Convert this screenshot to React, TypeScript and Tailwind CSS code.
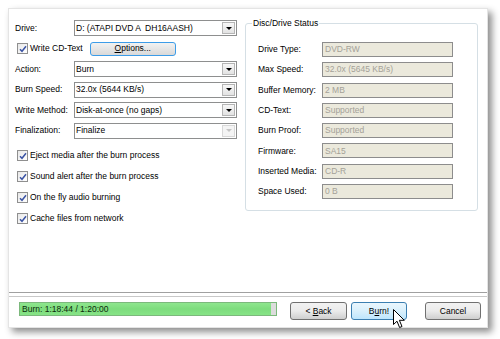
import React from "react";

const font = { fontFamily: '"Liberation Sans", Arial, sans-serif' };

const Select = ({ value, disabled }: { value: string; disabled?: boolean }) => (
  <div className="flex h-[16px] w-[163px] items-stretch border border-[#8e8f8f] bg-white">
    <div className="flex flex-1 items-center whitespace-pre pl-[1px] text-[8.5px] leading-none text-black">
      {value}
    </div>
    <div
      className={
        "m-[1px] flex w-[13px] items-center justify-center border " +
        (disabled
          ? "border-[#d8d8d8] bg-[#f4f4f4]"
          : "border-[#b5b5b5] bg-gradient-to-b from-[#f7f7f7] to-[#e3e3e3]")
      }
    >
      <div
        className={
          "h-0 w-0 border-x-[3px] border-t-[3px] border-x-transparent " +
          (disabled ? "border-t-[#c4c4c4]" : "border-t-black")
        }
      />
    </div>
  </div>
);

const Check = () => (
  <div className="flex h-[11px] w-[11px] items-center justify-center border border-[#8f8f8f] bg-gradient-to-br from-[#e8e8e8] to-[#ffffff]">
    <svg width="8" height="8" viewBox="0 0 8 8">
      <path d="M1 4.2 L3 6.3 L7 1.3" fill="none" stroke="#3a53a4" strokeWidth="1.5" />
    </svg>
  </div>
);

const Row = ({ label, value }: { label: string; value: string }) => (
  <div className="flex h-[16px] items-center">
    <div className="w-[59px] text-[8.5px] text-black">{label}</div>
    <Select value={value} disabled={label === "Finalization:"} />
  </div>
);

const Field = ({ label, value }: { label: string; value: string }) => (
  <div className="flex h-[15px] items-center">
    <div className="w-[64px] text-[8.5px] text-black">{label}</div>
    <div className="flex h-[15px] w-[131px] items-center border border-[#8d8d8d] bg-[#ebe9dc] pl-[2px] text-[8.5px] text-[#a4a198]">
      {value}
    </div>
  </div>
);

const Button = ({
  children,
  hot,
  w,
}: {
  children: React.ReactNode;
  hot?: boolean;
  w: string;
}) => (
  <div
    className={
      w +
      " flex h-[18px] items-center justify-center rounded-[3px] border text-[8.5px] text-black " +
      (hot
        ? "border-[#3c7fb1] bg-gradient-to-b from-[#eaf6fd] via-[#d9f0fc] to-[#bee6fd]"
        : "border-[#707070] bg-gradient-to-b from-[#f2f2f2] via-[#ebebeb] to-[#cfcfcf]")
    }
  >
    {children}
  </div>
);

export default function App() {
  const status: [string, string][] = [
    ["Drive Type:", "DVD-RW"],
    ["Max Speed:", "32.0x (5645 KB/s)"],
    ["Buffer Memory:", "2 MB"],
    ["CD-Text:", "Supported"],
    ["Burn Proof:", "Supported"],
    ["Firmware:", "SA15"],
    ["Inserted Media:", "CD-R"],
    ["Space Used:", "0 B"],
  ];
  const checks = [
    "Eject media after the burn process",
    "Sound alert after the burn process",
    "On the fly audio burning",
    "Cache files from network",
  ];

  return (
    <div className="h-[339px] w-[500px] bg-white pl-[8px] pt-[8px]" style={font}>
      <div className="relative flex h-[320px] w-[480px] flex-col border border-[#e4e4e4] bg-white shadow-[4px_4px_7px_rgba(0,0,0,0.45)]">
        <div className="flex flex-1 gap-[8px] pl-[6px] pt-[11px]">
          <div className="flex w-[222px] flex-col">
            <div className="flex flex-col gap-[4.5px]">
              <Row label="Drive:" value="D: (ATAPI DVD A  DH16AASH)" />
              <div className="flex h-[16px] items-center">
                <div className="ml-[2px] mr-[2px]">
                  <Check />
                </div>
                <span className="text-[8.5px] text-black">Write CD-Text</span>
                <div className="ml-[7px] flex h-[14px] w-[86px] items-center justify-center rounded-[3px] border border-[#3c9ce8] bg-gradient-to-b from-[#f2f2f2] to-[#d9d9d9] text-[8.5px] text-black">
                  <span>
                    <span className="underline">O</span>ptions...
                  </span>
                </div>
              </div>
              <Row label="Action:" value="Burn" />
              <Row label="Burn Speed:" value="32.0x (5644 KB/s)" />
              <Row label="Write Method:" value="Disk-at-once (no gaps)" />
              <Row label="Finalization:" value="Finalize" />
            </div>
            <div className="mt-[10px] flex flex-col gap-[7px]">
              {checks.map((c) => (
                <div key={c} className="flex h-[14px] items-center">
                  <div className="ml-[2px] mr-[2px]">
                    <Check />
                  </div>
                  <span className="text-[8.5px] text-black">{c}</span>
                </div>
              ))}
            </div>
          </div>
          <div className="relative mt-[3px] h-[188px] w-[233px] rounded-[3px] border border-[#d5dfe5]">
            <div className="absolute left-[6px] top-[-6px] bg-white px-[1px] text-[8.5px] leading-[10px] text-black">
              Disc/Drive Status
            </div>
            <div className="flex flex-col gap-[5.3px] pl-[12px] pt-[18px]">
              {status.map(([l, v]) => (
                <Field key={l} label={l} value={v} />
              ))}
            </div>
          </div>
        </div>
        <div className="flex flex-col">
          <div className="h-[1px] bg-[#a0a0a0]" />
          <div className="h-[3px] bg-white" />
          <div className="h-[1px] bg-[#c8c8c8]" />
        </div>
        <div className="flex h-[30px] items-start pl-[10px] pr-[6px] pt-[5px]">
          <div className="relative h-[14px] w-[259px] border border-[#7cb87c] bg-[#dcdcdc]">
            <div className="h-full w-[98%] bg-gradient-to-b from-[#8ee68e] via-[#7ddc7d] to-[#86e486]" />
            <div className="absolute inset-0 flex items-center pl-[2px] text-[8.5px] text-[#0c2a0c]">
              Burn: 1:18:44 / 1:20:00
            </div>
          </div>
          <div className="ml-[13px] flex">
            <Button w="w-[57px]">
              <span>
                &lt; <span className="underline">B</span>ack
              </span>
            </Button>
            <div className="ml-[4px]">
              <Button w="w-[56px]" hot>
                <span>
                  B<span className="underline">u</span>rn!
                </span>
              </Button>
            </div>
            <div className="ml-[18px]">
              <Button w="w-[56px]">Cancel</Button>
            </div>
          </div>
        </div>
        <svg
          className="absolute left-[384px] top-[300px]"
          width="13"
          height="20"
          viewBox="0 0 13 20"
        >
          <path
            d="M0.5 0.5 L0.5 15.5 L4 12.2 L6.6 18.5 L9 17.5 L6.4 11.3 L11.3 11.3 Z"
            fill="white"
            stroke="black"
            strokeWidth="1"
            strokeLinejoin="round"
          />
        </svg>
      </div>
    </div>
  );
}
